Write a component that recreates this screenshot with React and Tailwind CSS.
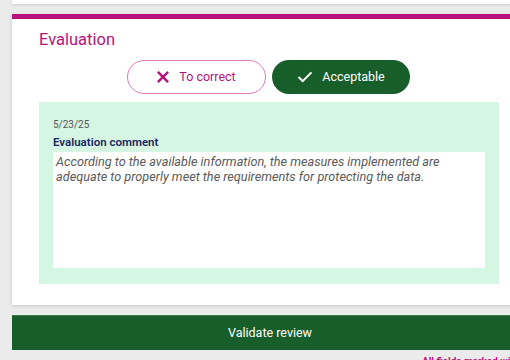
import React from 'react';

const XIcon = () => (
  <svg width="12" height="12" viewBox="0 0 14 14" fill="none" stroke="currentColor" strokeWidth="2.8" strokeLinecap="square">
    <path d="M2 2 L12 12 M12 2 L2 12" />
  </svg>
);

const CheckIcon = () => (
  <svg width="16" height="12" viewBox="0 0 17 13" fill="none" stroke="currentColor" strokeWidth="2.2">
    <path d="M1.5 6.5 L6 11 L15.5 1.5" />
  </svg>
);

export default function App() {
  return (
    <div className="w-[510px] h-[360px] overflow-hidden bg-[#ebebeb] font-['Roboto',sans-serif]">
      <div className="ml-3 w-[520px]">
        <div className="h-1 bg-white shadow-[0_1px_3px_rgba(0,0,0,0.12)]" />
        <div className="mt-[10px] bg-white shadow-[0_1px_4px_rgba(0,0,0,0.15)]">
          <div className="h-[5px] bg-[#b5127d]" />
          <div className="px-[27px] pt-[8px] pb-[21px]">
            <h2 className="text-[16.5px] leading-[26px] text-[#b5127d]">Evaluation</h2>
            <div className="mt-[7px] flex gap-[6px] pl-[88px]">
              <button className="w-[139px] h-[34px] rounded-full border border-[#e27ab8] bg-white text-[#b5127d] text-[12.5px] flex items-center justify-center gap-[10px]">
                <XIcon />
                <span>To correct</span>
              </button>
              <button className="w-[138px] h-[34px] rounded-full bg-[#175e2a] text-white text-[12.5px] flex items-center justify-center gap-[9px]">
                <CheckIcon />
                <span>Acceptable</span>
              </button>
            </div>
            <div className="mt-[8px] w-[460px] h-[182px] bg-[#d6f6e4] px-[14px] pt-[16px]">
              <div className="text-[10px] leading-[14px] text-[#555]">5/23/25</div>
              <div className="mt-[2px] text-[11.5px] leading-[16px] font-semibold text-[#1a2660]">Evaluation comment</div>
              <div className="mt-[2px] h-[116px] bg-white px-[3px] pt-[2px] text-[12.7px] leading-[15px] italic text-[#5a5a5a]">
                According to the available information, the measures implemented are adequate to properly meet the requirements for protecting the data.
              </div>
            </div>
          </div>
        </div>
        <button className="mt-[10px] w-full h-[35px] bg-[#175e2a] text-white text-[12.5px] border-t border-[#3b7d4c] flex items-center">
          <span className="ml-[216px]">Validate review</span>
        </button>
        <div className="mt-[4px] pl-[410px] text-[10px] font-bold text-[#b5127d] whitespace-nowrap">All fields marked with * are mandatory</div>
      </div>
    </div>
  );
}
